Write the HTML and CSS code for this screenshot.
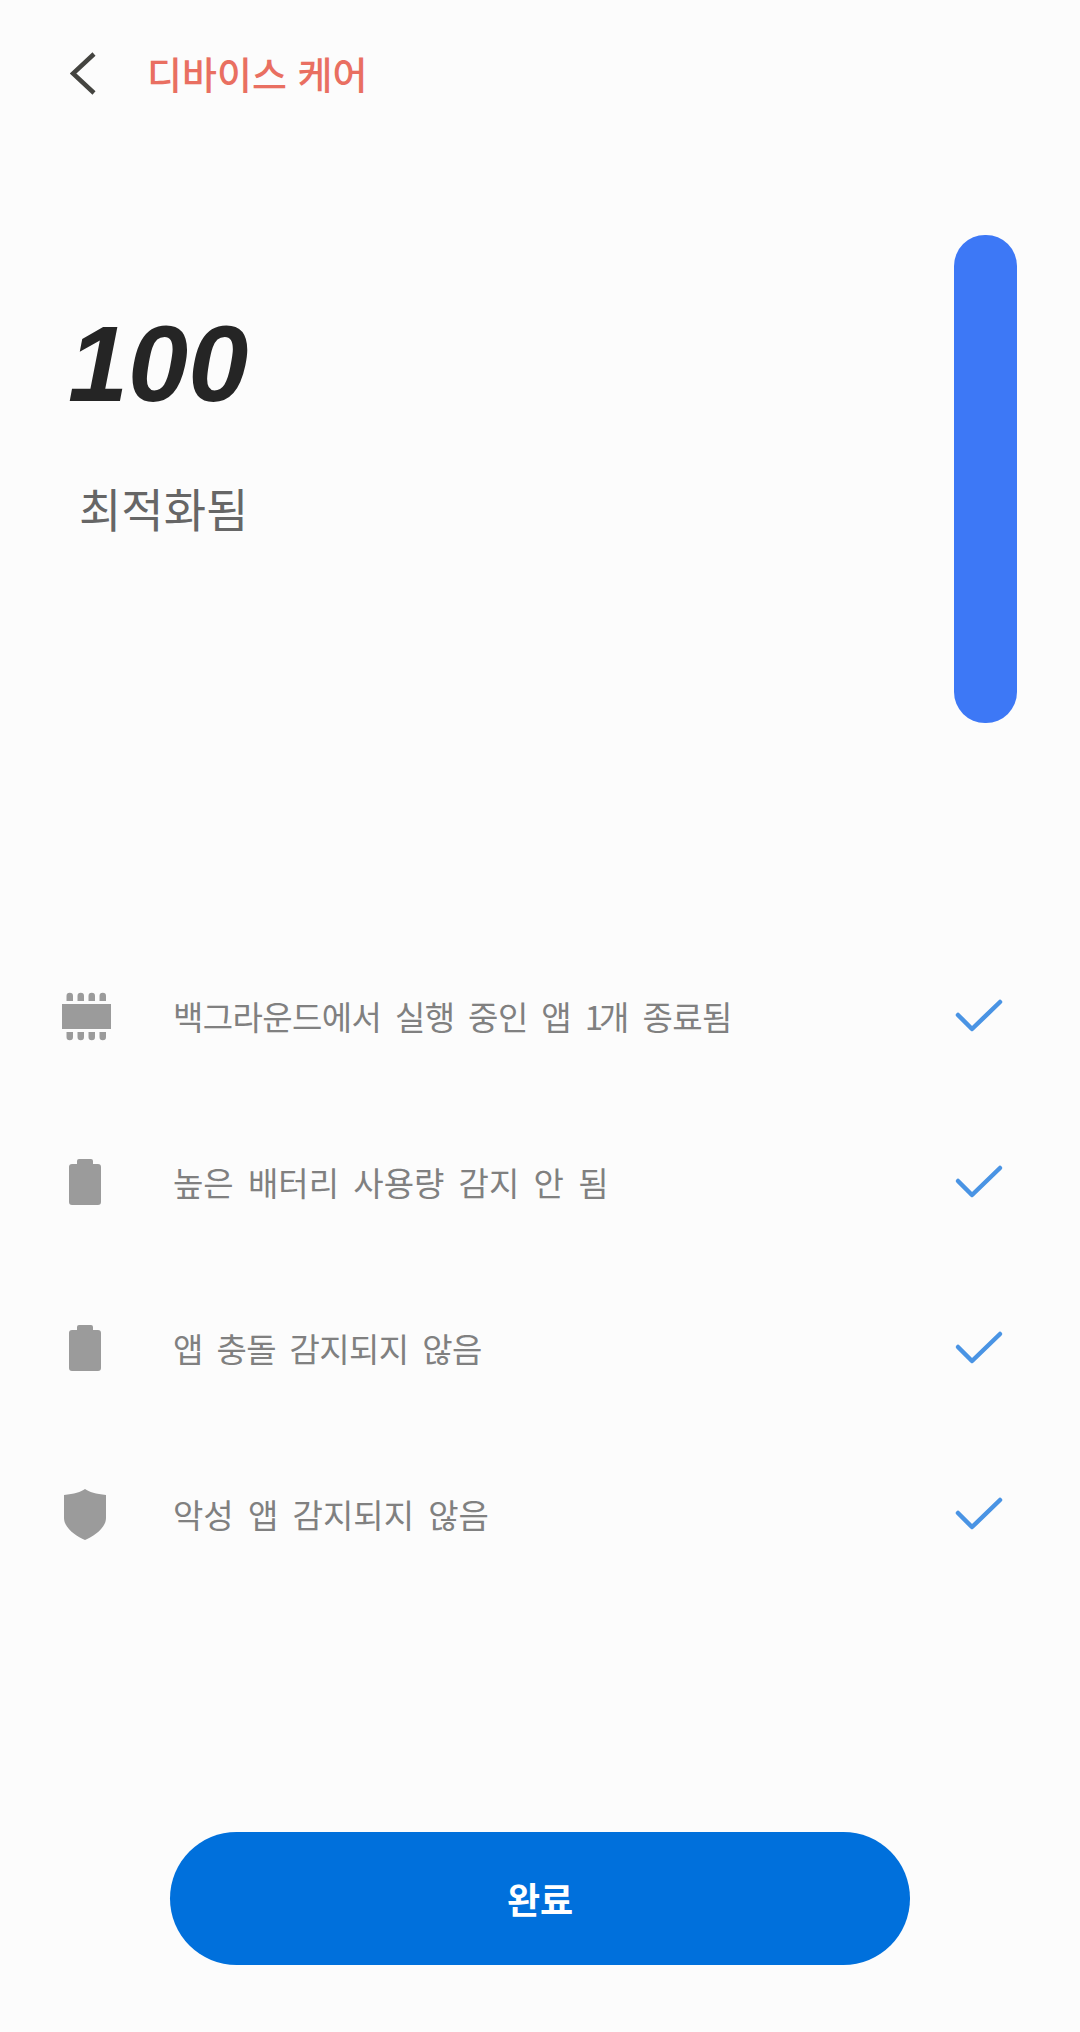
FILE: index.html
```html
<!DOCTYPE html>
<html lang="ko">
<head>
	<meta charset="UTF-8">
	<title>디바이스 케어</title>
	<link rel="stylesheet" href="styles.css">
</head>
<body>
	<div class="page">
		<div class="top-bar">
			<svg class="back-icon" width="26" height="44" viewBox="0 0 26 44">
				<path d="M24 2 L3 21.5 L24 41" fill="none" stroke="#444440" stroke-width="4.5"/>
			</svg>
			<h1 class="title">디바이스 케어</h1>
		</div>

		<div class="hero">
			<div class="score-box">
				<div class="score">100</div>
				<div class="score-label">최적화됨</div>
			</div>
			<div class="score-bar"></div>
		</div>

		<ul class="check-list">
			<li class="check-row">
				<svg class="row-icon" width="60" height="60" viewBox="0 0 60 60">
					<rect x="6" y="17" width="49" height="25" fill="#9b9b9b"/>
					<path d="M10.5 14 v-5 a3.2 3.2 0 0 1 6.5 0 v5 z M21.5 14 v-5 a3.2 3.2 0 0 1 6.5 0 v5 z M32.5 14 v-5 a3.2 3.2 0 0 1 6.5 0 v5 z M43.5 14 v-5 a3.2 3.2 0 0 1 6.5 0 v5 z" fill="#9b9b9b"/>
					<path d="M10.5 45 v5 a3.2 3.2 0 0 0 6.5 0 v-5 z M21.5 45 v5 a3.2 3.2 0 0 0 6.5 0 v-5 z M32.5 45 v5 a3.2 3.2 0 0 0 6.5 0 v-5 z M43.5 45 v5 a3.2 3.2 0 0 0 6.5 0 v-5 z" fill="#9b9b9b"/>
				</svg>
				<span class="row-text row-text-tight">백그라운드에서 실행 중인 앱 <span class="row-digit">1</span>개 종료됨</span>
				<svg class="row-check" width="60" height="60" viewBox="0 0 60 60">
					<path d="M9 28 L23 42 L51 15" fill="none" stroke="#4a94e4" stroke-width="4.5" stroke-linecap="round" stroke-linejoin="round"/>
				</svg>
			</li>
			<li class="check-row">
				<svg class="row-icon" width="60" height="60" viewBox="0 0 60 60">
					<path d="M21 8 a2 2 0 0 1 2 -2 h12 a2 2 0 0 1 2 2 v3 h5 a3 3 0 0 1 3 3 v35 a3 3 0 0 1 -3 3 h-26 a3 3 0 0 1 -3 -3 v-35 a3 3 0 0 1 3 -3 h5 z" fill="#9b9b9b"/>
				</svg>
				<span class="row-text">높은 배터리 사용량 감지 안 됨</span>
				<svg class="row-check" width="60" height="60" viewBox="0 0 60 60">
					<path d="M9 28 L23 42 L51 15" fill="none" stroke="#4a94e4" stroke-width="4.5" stroke-linecap="round" stroke-linejoin="round"/>
				</svg>
			</li>
			<li class="check-row">
				<svg class="row-icon" width="60" height="60" viewBox="0 0 60 60">
					<path d="M21 8 a2 2 0 0 1 2 -2 h12 a2 2 0 0 1 2 2 v3 h5 a3 3 0 0 1 3 3 v35 a3 3 0 0 1 -3 3 h-26 a3 3 0 0 1 -3 -3 v-35 a3 3 0 0 1 3 -3 h5 z" fill="#9b9b9b"/>
				</svg>
				<span class="row-text row-text-tight">앱 충돌 감지되지 않음</span>
				<svg class="row-check" width="60" height="60" viewBox="0 0 60 60">
					<path d="M9 28 L23 42 L51 15" fill="none" stroke="#4a94e4" stroke-width="4.5" stroke-linecap="round" stroke-linejoin="round"/>
				</svg>
			</li>
			<li class="check-row">
				<svg class="row-icon" width="60" height="60" viewBox="0 0 60 60">
					<path d="M29 4 C33 7 40 9 50 10 V33 C50 43 38 51 29 55 C20 51 8 43 8 33 V10 C18 9 25 7 29 4 Z" fill="#9b9b9b"/>
				</svg>
				<span class="row-text">악성 앱 감지되지 않음</span>
				<svg class="row-check" width="60" height="60" viewBox="0 0 60 60">
					<path d="M9 28 L23 42 L51 15" fill="none" stroke="#4a94e4" stroke-width="4.5" stroke-linecap="round" stroke-linejoin="round"/>
				</svg>
			</li>
		</ul>

		<button class="done-button">완료</button>
	</div>
</body>
</html>
```

FILE: styles.css
```css
* {
	box-sizing: border-box;
}

body {
	margin: 0;
	background-color: #fcfcfc;
	font-family: "Noto Sans CJK KR", "Noto Sans", sans-serif;
}

.page {
	width: 1080px;
	height: 2032px;
	overflow: hidden;
}

.top-bar {
	display: flex;
	align-items: center;
	height: 148px;
	padding-left: 70px;
}

.back-icon {
	flex-shrink: 0;
}

.title {
	margin: 0 0 0 51px;
	padding-bottom: 4px;
	font-size: 38px;
	font-weight: 500;
	color: #e96f61;
}

.hero {
	display: flex;
	justify-content: space-between;
	margin-top: 87px;
	padding: 0 63px 0 68px;
}

.score-box {
	padding-top: 70px;
}

.score {
	font-family: "Liberation Sans", sans-serif;
	font-size: 108px;
	font-weight: 700;
	font-style: italic;
	line-height: 118px;
	color: #252525;
}

.score-label {
	margin: 51px 0 0 11px;
	font-size: 46px;
	line-height: 66px;
	color: #666666;
}

.score-bar {
	width: 63px;
	height: 488px;
	border-radius: 31px;
	background-color: #3d78f6;
}

.check-list {
	list-style: none;
	margin: 211px 0 0;
	padding: 0 56px;
}

.check-row {
	display: flex;
	align-items: center;
	height: 166px;
}

.row-icon {
	flex-shrink: 0;
}

.row-text {
	flex-grow: 1;
	margin-left: 57px;
	padding-bottom: 2px;
	font-size: 33px;
	word-spacing: 5px;
	color: #808080;
}

.row-text-tight {
	letter-spacing: -0.6px;
}

.row-digit {
	letter-spacing: -4px;
}

.row-check {
	flex-shrink: 0;
	margin-right: 15px;
}

.done-button {
	display: block;
	width: 740px;
	height: 133px;
	margin: 234px auto 0;
	padding-bottom: 3px;
	border: 0;
	border-radius: 67px;
	background-color: #0070dc;
	font-family: inherit;
	font-size: 36px;
	font-weight: 700;
	color: #ffffff;
}
```
